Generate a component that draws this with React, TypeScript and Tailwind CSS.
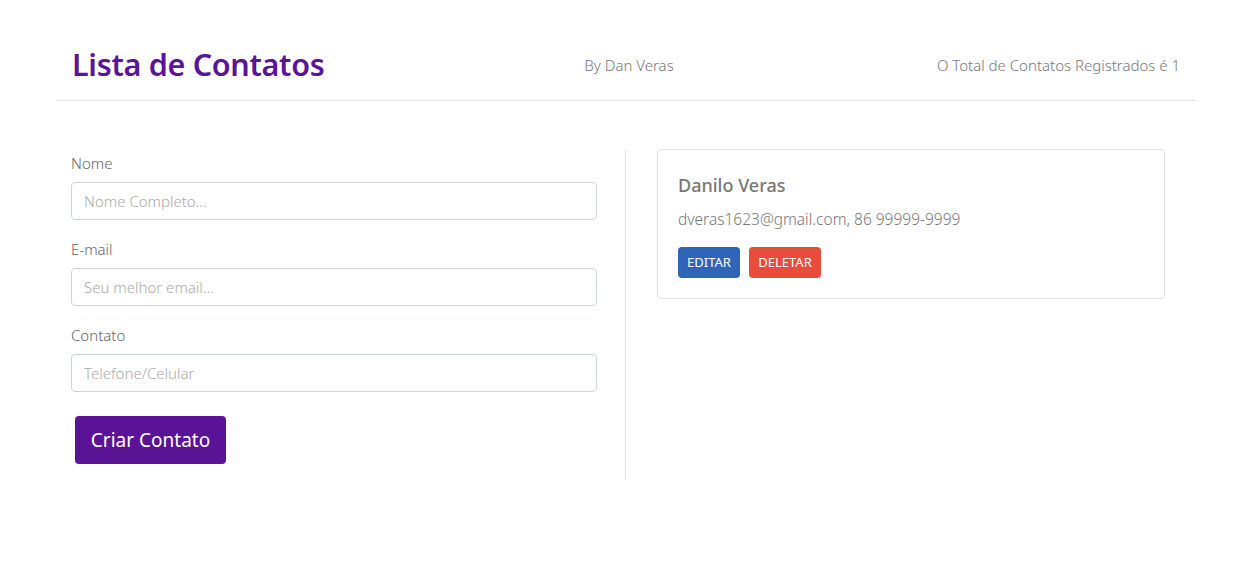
import React from 'react';

const App: React.FC = () => {
  return (
    <div className="min-h-[562px] bg-white font-['Noto_Sans',sans-serif] font-light text-[#666]">
      <div className="ml-[56px] w-[1140px] pt-[30px]">
        <header className="flex h-[71px] items-center justify-between border-b border-[#e3e3e3] px-4 pt-[2px] pb-[2px]">
          <h1 className="w-[400px] text-[30.5px] font-semibold tracking-[-0.3px] text-[#5a1496]">Lista de Contatos</h1>
          <span className="ml-[6px] text-[15px] text-[#777]">By Dan Veras</span>
          <span className="w-[400px] text-right text-[15px] text-[#777]">O Total de Contatos Registrados é 1</span>
        </header>

        <main className="mt-[48px] flex">
          <form className="flex w-[570px] flex-col border-r border-[#e3e3e3] pb-4 pl-[15px] pr-[28px]">
            <label className="mb-[8px] mt-[3px] text-[15px] leading-[22px]">Nome</label>
            <input
              className="h-[38px] rounded border border-[#ced4da] px-3 text-[15px] placeholder:text-[#aaa] outline-none"
              placeholder="Nome Completo..."
            />
            <label className="mb-[8px] mt-[18px] text-[15px] leading-[22px]">E-mail</label>
            <input
              className="h-[38px] rounded border border-[#ced4da] px-3 text-[15px] placeholder:text-[#aaa] outline-none"
              placeholder="Seu melhor email..."
            />
            <label className="mb-[8px] mt-[18px] text-[15px] leading-[22px]">Contato</label>
            <input
              className="h-[38px] rounded border border-[#ced4da] px-3 text-[15px] placeholder:text-[#aaa] outline-none"
              placeholder="Telefone/Celular"
            />
            <button
              type="button"
              className="ml-1 mt-6 h-[48px] w-[151px] rounded bg-[#5b1396] text-[19px] font-normal text-white"
            >
              Criar Contato
            </button>
          </form>

          <section className="flex-1 px-[31px]">
            <div className="rounded border border-[#e0e0e0] px-5 pb-5 pt-[22px]">
              <h2 className="text-[18px] font-medium text-[#777]">Danilo Veras</h2>
              <p className="mt-[9px] text-[15.5px] text-[#777]">dveras1623@gmail.com, 86 99999-9999</p>
              <div className="mt-[16px] flex gap-[9px]">
                <button type="button" className="h-[31px] w-[62px] rounded-sm bg-[#3064b8] text-[13px] font-normal text-white">
                  EDITAR
                </button>
                <button type="button" className="h-[31px] w-[72px] rounded-sm bg-[#e74c3c] text-[13px] font-normal text-white">
                  DELETAR
                </button>
              </div>
            </div>
          </section>
        </main>
      </div>
    </div>
  );
};

export default App;
